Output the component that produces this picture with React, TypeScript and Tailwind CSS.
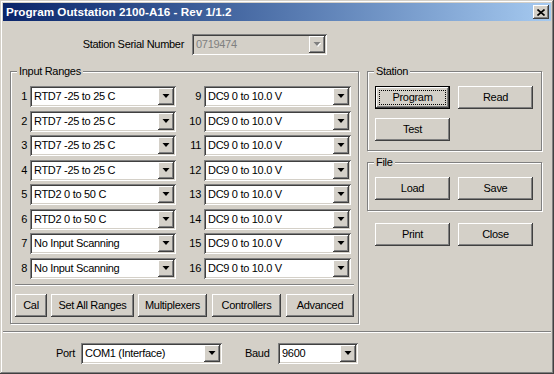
import type { ReactNode } from 'react';

const raised =
  'shadow-[inset_-1px_-1px_#404040,inset_1px_1px_#ffffff,inset_-2px_-2px_#808080,inset_2px_2px_#d4d0c8]';
const sunken =
  'shadow-[inset_1px_1px_#808080,inset_-1px_-1px_#ffffff,inset_2px_2px_#404040,inset_-2px_-2px_#d4d0c8]';

function Arrow({ disabled }: { disabled?: boolean }) {
  return (
    <div className={`w-[16px] h-full bg-[#d4d0c8] flex items-center justify-center ${raised}`}>
      <svg width="8" height="5" viewBox="0 0 8 5">
        {disabled && <path d="M1.5 1h7l-3.5 4z" fill="#ffffff" />}
        <path d="M0.5 0h7l-3.5 4z" fill={disabled ? '#808080' : '#000000'} />
      </svg>
    </div>
  );
}

function Combo({ w, value, disabled }: { w: string; value: string; disabled?: boolean }) {
  return (
    <div className={`${w} h-[21px] p-[2px] flex ${sunken} ${disabled ? 'bg-[#d4d0c8]' : 'bg-white'}`}>
      <div className={`flex-1 pl-[2px] leading-[17px] truncate ${disabled ? 'text-[#808080]' : 'text-black'}`}>
        {value}
      </div>
      <Arrow disabled={disabled} />
    </div>
  );
}

function Btn({ w, children, def }: { w: string; children: ReactNode; def?: boolean }) {
  if (def) {
    return (
      <div className={`${w} h-[23px] border border-black`}>
        <div className={`w-full h-full p-[3px] ${raised}`}>
          <div className="w-full h-full border border-dotted border-black flex items-center justify-center">
            {children}
          </div>
        </div>
      </div>
    );
  }
  return <div className={`${w} h-[23px] flex items-center justify-center ${raised}`}>{children}</div>;
}

function Group({ label, cls, children }: { label: string; cls: string; children: ReactNode }) {
  return (
    <div className={`relative border border-[#808080] shadow-[1px_1px_0_#ffffff,inset_1px_1px_0_#ffffff] ${cls}`}>
      <span className="absolute -top-[8px] left-[6px] bg-[#d4d0c8] px-[2px] leading-[14px]">{label}</span>
      {children}
    </div>
  );
}

const left = [
  'RTD7 -25 to 25 C',
  'RTD7 -25 to 25 C',
  'RTD7 -25 to 25 C',
  'RTD7 -25 to 25 C',
  'RTD2 0 to 50 C',
  'RTD2 0 to 50 C',
  'No Input Scanning',
  'No Input Scanning',
];

export default function App() {
  return (
    <div className="w-[554px] h-[374px] bg-[#d4d0c8] p-[3px] flex flex-col text-[11px] tracking-[-0.3px] text-black font-['Liberation_Sans',Arial,sans-serif] shadow-[inset_-1px_-1px_#404040,inset_1px_1px_#d4d0c8,inset_-2px_-2px_#808080,inset_2px_2px_#ffffff]">
      {/* Title bar */}
      <div className="h-[18px] flex items-center pl-[3px] pr-[2px] bg-linear-to-r from-[#0a246a] to-[#a6caf0]">
        <span className="text-white font-bold text-[11.7px] tracking-normal">Program Outstation 2100-A16 - Rev 1/1.2</span>
        <div className={`ml-auto w-[16px] h-[14px] bg-[#d4d0c8] flex items-center justify-center ${raised}`}>
          <svg width="8" height="7" viewBox="0 0 8 7">
            <path d="M0.5 0.5l7 6M7.5 0.5l-7 6" stroke="#000" strokeWidth="1.6" />
          </svg>
        </div>
      </div>

      {/* Serial number */}
      <div className="mt-[13px] flex items-center">
        <div className="w-[181px] text-right">Station Serial Number</div>
        <Combo w="ml-[8px] w-[135px]" value="0719474" disabled />
      </div>

      <div className="mt-[16px] flex">
        <Group label="Input Ranges" cls="ml-[7px] w-[349px] h-[253px]">
          <div className="pt-[14px] flex flex-col gap-y-[3.5px]">
            {left.map((v, i) => (
              <div key={i} className="flex items-center">
                <div className="w-[19px] pr-[3px] text-right">{i + 1}</div>
                <Combo w="w-[146px]" value={v} />
                <div className="w-[28px] pr-[3px] text-right">{i + 9}</div>
                <Combo w="w-[147px]" value="DC9 0 to 10.0 V" />
              </div>
            ))}
          </div>
          <div className="mt-[5px] mx-[4px] border-t border-t-[#808080] border-b border-b-white" />
          <div className="mt-[8px] flex">
            <Btn w="ml-[4px] w-[32px]">Cal</Btn>
            <Btn w="ml-[4px] w-[83px]">Set All Ranges</Btn>
            <Btn w="ml-[4px] w-[69px]">Multiplexers</Btn>
            <Btn w="ml-[5px] w-[69px]">Controllers</Btn>
            <Btn w="ml-[5px] w-[68px]">Advanced</Btn>
          </div>
        </Group>

        <div className="ml-[8px] w-[175px] flex flex-col">
          <Group label="Station" cls="h-[80px]">
            <div className="pt-[14px] pl-[7px] flex gap-x-[8px]">
              <Btn w="w-[75px]" def>Program</Btn>
              <Btn w="w-[75px]">Read</Btn>
            </div>
            <div className="mt-[9px] pl-[7px]">
              <Btn w="w-[75px]">Test</Btn>
            </div>
          </Group>
          <Group label="File" cls="mt-[11px] h-[49px]">
            <div className="pt-[14px] pl-[7px] flex gap-x-[8px]">
              <Btn w="w-[75px]">Load</Btn>
              <Btn w="w-[75px]">Save</Btn>
            </div>
          </Group>
          <div className="mt-[12px] pl-[8px] flex gap-x-[8px]">
            <Btn w="w-[75px]">Print</Btn>
            <Btn w="w-[75px]">Close</Btn>
          </div>
        </div>
      </div>

      <div className="mt-[7px] border-t border-t-[#808080] border-b border-b-white" />

      <div className="mt-[10px] flex items-center">
        <div className="w-[72px] text-right">Port</div>
        <Combo w="ml-[6px] w-[141px]" value="COM1 (Interface)" />
        <div className="ml-[23px] w-[25px]">Baud</div>
        <Combo w="ml-[8px] w-[80px]" value="9600" />
      </div>
    </div>
  );
}
